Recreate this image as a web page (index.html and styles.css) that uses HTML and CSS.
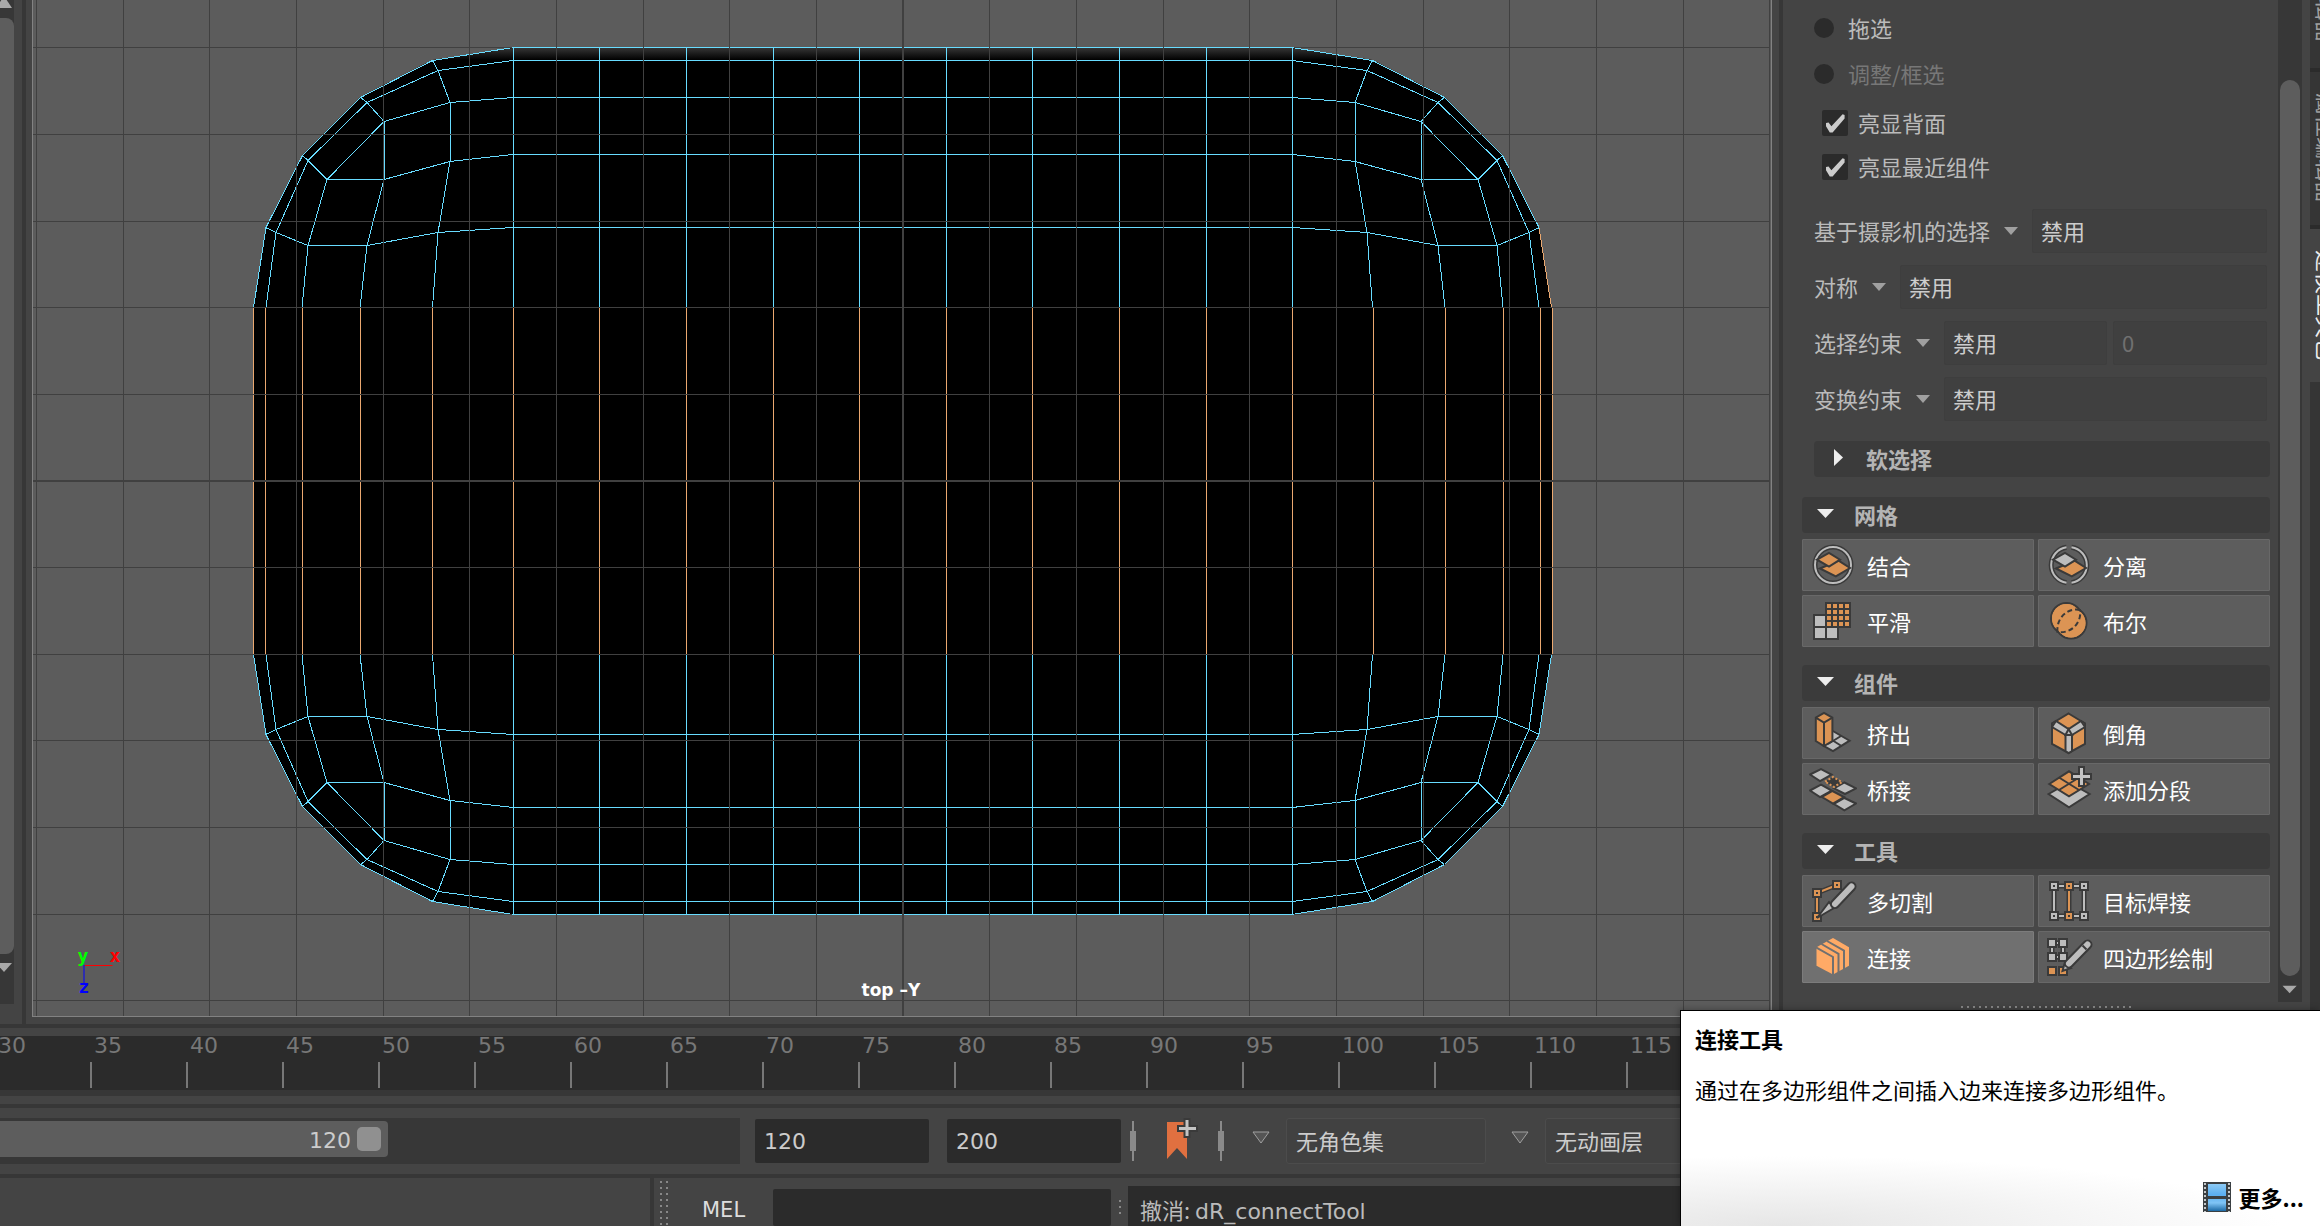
FILE: index.html
```html
<!DOCTYPE html>
<html lang="zh-CN">
<head>
<meta charset="utf-8">
<title>top -Y</title>
<link rel="stylesheet" href="styles.css">
</head>
<body>
<main class="workspace">
  <div class="side-scroll">
    <svg class="arrow" viewBox="0 0 14 18"><path d="M-4 8 4 -4 12 8z"/></svg>
    <div class="side-thumb"></div>
    <svg class="arrow arrow-end" viewBox="0 0 14 50"><path d="M-4 9H12L4 18z"/></svg>
  </div>
  <div class="splitter"></div>
  <section class="viewport" aria-label="top -Y">
    <svg viewBox="33 0 1739 1016" preserveAspectRatio="xMidYMid slice">
      <defs>
        <linearGradient id="rim" gradientUnits="userSpaceOnUse" x1="0" y1="48" x2="0" y2="60">
          <stop offset="0" stop-color="#343434"/><stop offset="1" stop-color="#000"/>
        </linearGradient>
        <linearGradient id="rim-side" gradientUnits="userSpaceOnUse" x1="350" y1="90" x2="357" y2="98">
          <stop offset="0" stop-color="#2c2c2c"/><stop offset="1" stop-color="#000"/>
        </linearGradient>
        <path id="corner-fill" d="M254 481V307.5L266 227.5 303 155.5 361 97.5 433 60.5 513.5 47.5H904V481z"/>
        <g id="corner-edge">
          <path d="M266.5 227.5 303 155.5 361 97.5 433 60.5 513.5 47.5"/>
          <path d="M266.5 307.5 276.5 232.5 308.5 160.5 367.5 102.5 438.5 70.5 513.5 60.5H904"/>
          <path d="M302.5 307.5 308.5 245.5 327.5 179.5 384.5 121.5 450.5 102.5 513.5 97.5H904"/>
          <path d="M360.5 307.5 367.5 245.5 384.5 179.5 450.5 161.5 513.5 154.5H904"/>
          <path d="M433 307.5 438.5 232.5 450.5 161.5V102.5L438.5 70.5 433 60.5"/>
          <path d="M361 97.5 367.5 102.5 384.5 121.5V179.5H327.5L308.5 160.5 303 155.5"/>
          <path d="M266 227.5 276.5 232.5 308.5 245.5H367.5L438.5 232.5 513.5 227.5H904"/>
          <path d="M513.5 47.5H904M513.5 47.5V307.5M599.5 47.5V307.5M686.5 47.5V307.5M773.5 47.5V307.5M859.5 47.5V307.5"/>
        </g>
        <path id="corner-outer" d="M254 307.5 266.5 227.5"/>
        <path id="picked" d="M253.5 307V655M265.5 307V655M302.5 307V655M360.5 307V655M432.5 307V655M513.5 307V655M599.5 307V655M686.5 307V655M773.5 307V655M859.5 307V655"/>
      </defs>
      <g class="mesh-fill">
        <use href="#corner-fill"/>
        <use href="#corner-fill" transform="translate(1806 0) scale(-1 1)"/>
        <use href="#corner-fill" transform="translate(0 962) scale(1 -1)"/>
        <use href="#corner-fill" transform="translate(1806 962) scale(-1 -1)"/>
      </g>
      <path fill="url(#rim)" d="M433 60 513 48H1293L1373 60 1368 70 1293 60H513L438 70z"/>
      <path id="rim-left" fill="url(#rim-side)" d="M303 155 361 97 433 60 438 70 367 102 308 160z"/>
      <use href="#rim-left" transform="translate(1806 0) scale(-1 1)"/>
      <g class="edge">
        <use href="#corner-edge"/><use href="#corner-outer"/>
        <use href="#corner-edge" transform="translate(1806 0) scale(-1 1)"/>
        <use href="#corner-edge" transform="translate(0 962) scale(1 -1)"/><use href="#corner-outer" transform="translate(0 962) scale(1 -1)"/>
        <use href="#corner-edge" transform="translate(1806 962) scale(-1 -1)"/><use href="#corner-outer" transform="translate(1806 962) scale(-1 -1)"/>
      </g>
      <g class="edge picked">
        <use href="#picked"/>
        <use href="#picked" transform="translate(1806 0) scale(-1 1)"/>
        <use href="#corner-outer" transform="translate(1806 0) scale(-1 1)"/>
      </g>
      <path class="grid" d="M36.500 0V1016M123.500 0V1016M209.500 0V1016M296.500 0V1016M383.500 0V1016M469.500 0V1016M556.500 0V1016M643.500 0V1016M729.500 0V1016M816.500 0V1016M902.500 0V1016M989.500 0V1016M1076.500 0V1016M1163.500 0V1016M1249.500 0V1016M1336.500 0V1016M1423.500 0V1016M1509.500 0V1016M1596.500 0V1016M1683.500 0V1016M1769.500 0V1016M33 47.500H254M33 134.500H1770M33 221.500H1770M33 307.500H1770M33 394.500H1770M33 480.500H1770M33 481.500H1770M33 567.500H1770M33 654.500H1770M33 740.500H1770M33 827.500H1770M33 914.500H512M1294 914.500H1770M33 1000.500H1770M254 47.500H512M1294 47.500H1770"/>
      <path class="grid" d="M903.500 0V1016"/>
      <path class="axis-x" d="M85 965.500H113"/>
      <path class="axis-z" d="M84.500 965V984"/>
      <g class="gizmo">
        <text class="gizmo-y" x="78" y="962">y</text>
        <text class="gizmo-x" x="110" y="962">x</text>
        <text class="gizmo-z" x="79" y="993">z</text>
      </g>
      <text class="camera" x="862" y="996">top –Y</text>
    </svg>
  </section>
  <div class="splitter splitter-right"></div>
  <aside class="toolkit">
    <div class="options">
      <label class="radio-row"><input type="radio" name="pick"><span>拖选</span></label>
      <label class="radio-row off"><input type="radio" name="pick" disabled><span>调整/框选</span></label>
      <div class="checks">
        <label class="check-row"><input type="checkbox" checked><span>亮显背面</span></label>
        <label class="check-row"><input type="checkbox" checked><span>亮显最近组件</span></label>
      </div>
      <div class="menu-row"><label for="camera">基于摄影机的选择</label><i class="caret"></i><select id="camera"><option>禁用</option></select></div>
      <div class="menu-row"><label for="symmetry">对称</label><i class="caret"></i><select id="symmetry"><option>禁用</option></select></div>
      <div class="menu-row"><label for="constraint">选择约束</label><i class="caret"></i><select id="constraint"><option>禁用</option></select><input class="amount" type="text" value="0" disabled aria-label="选择约束"></div>
      <div class="menu-row"><label for="transform">变换约束</label><i class="caret"></i><select id="transform"><option>禁用</option></select></div>
      <button class="fold fold-closed"><svg viewBox="0 0 18 18"><path d="M5 0V17L14 8.500z"/></svg>软选择</button>
    </div>
    <button class="fold"><svg viewBox="0 0 18 18"><path d="M0 4H17L8.500 13z"/></svg>网格</button>
    <div class="tools">
      <button class="tool"><svg viewBox="0 0 48 48"><circle class="halo" cx="24" cy="24" r="18"/><circle class="ring" cx="24" cy="24" r="18"/><path class="o" d="M11 27.500 29.600 19.700 41 27 26.800 35.300z"/><path class="o" d="M8 18.700 20 12 31 18.700 20 25.500z"/></svg>结合</button>
      <button class="tool"><svg viewBox="0 0 48 48"><path class="halo" d="M21.500 6.200A18 18 0 0 0 21.500 41.800M26.500 6.200A18 18 0 0 1 26.500 41.800"/><path class="ring" d="M21.500 6.200A18 18 0 0 0 21.500 41.800M26.500 6.200A18 18 0 0 1 26.500 41.800"/><path class="o" d="M11 27.500 29.600 19.700 41 27 26.800 35.300z"/><path class="g" d="M8 18.700 20 12 31 18.700 20 25.500z"/></svg>分离</button>
      <button class="tool"><svg viewBox="0 0 48 48"><path class="d" d="M4 17H16V5H42V31H30V43H4z"/><path class="gf" d="M6 19H16V29H6zM6 31H16V41H6zM18 31H28V41H18z"/><path class="of" d="M18 7h4v4h-4zM24 7h4v4h-4zM30 7h4v4h-4zM36 7h4v4h-4zM18 13h4v4h-4zM24 13h4v4h-4zM30 13h4v4h-4zM36 13h4v4h-4zM18 19h4v4h-4zM24 19h4v4h-4zM30 19h4v4h-4zM36 19h4v4h-4zM18 25h4v4h-4zM24 25h4v4h-4zM30 25h4v4h-4zM36 25h4v4h-4z"/></svg>平滑</button>
      <button class="tool"><svg viewBox="0 0 48 48"><g class="o"><circle cx="21.500" cy="21.500" r="15.500"/><circle cx="26" cy="26" r="15.500"/></g><g class="of"><circle cx="21.500" cy="21.500" r="14.500"/><circle cx="26" cy="26" r="14.500"/></g><path class="dash" d="M35 13C24 10 11 20 12.500 35C26 37 37 26 35 13z"/></svg>布尔</button>
    </div>
    <button class="fold"><svg viewBox="0 0 18 18"><path d="M0 4H17L8.500 13z"/></svg>组件</button>
    <div class="tools">
      <button class="tool"><svg viewBox="0 0 48 48"><path class="g" d="M23 21.500 40.600 31.700 24 42 15 37z"/><path class="l" d="M23 31 32.500 37M32 27 19 35"/><path class="o" d="M6.800 8.700 15 4 23.400 8.700V32L15 37 6.800 32z"/><path class="l" d="M6.800 8.700 15 13.500 23.400 8.700M15 13.500V37"/></svg>挤出</button>
      <button class="tool"><svg viewBox="0 0 48 48"><path class="o" d="M23.600 4.500 40 14.500V35L23.600 44 7 35V14.500z"/><path class="g" d="M7 14.500 11 12 23.600 20 36 12 40 14.500V18L27 26V42L23.600 44 20.500 42V26L7 18z"/><path class="l" d="M20.500 26 23.600 20 27 26zM11 12 7 18M36 12 40 18"/></svg>倒角</button>
      <button class="tool"><svg viewBox="0 0 48 48"><path class="g" d="M1 9.500 12 4 22.500 9.500 11 16zM25 23.300 35.400 17.500 47 23.300 36 29zM1 25.500 12 19.700 22.700 25.500 11 32zM25 39 35.400 33 47 38.500 35.400 45.300z"/><path class="o" d="M13 32 23.500 26 35 32 24 38.500z"/><path class="od" d="M16 16.500 24 12 33 17 25 22z"/></svg>桥接</button>
      <button class="tool"><svg viewBox="0 0 48 48"><path class="g" d="M3.600 29 24 17.300 44.600 29 24 42.300z"/><path class="o" d="M4.300 19 24 6.300 44 19 24 31.300z"/><path class="l" d="M14 12.500 34 25M34 12.500 14 25"/><path class="plus-back" d="M36.500 1V22M26 11.500H47"/><path class="plus" d="M36.500 3V20M28 11.500H45"/></svg>添加分段</button>
    </div>
    <button class="fold"><svg viewBox="0 0 18 18"><path d="M0 4H17L8.500 13z"/></svg>工具</button>
    <div class="tools">
      <button class="tool"><svg viewBox="0 0 48 48"><path class="halo" d="M8 40V16L28 8"/><path class="ol" d="M8 40V16L28 8"/><path class="pt-back" d="M3 11h10v10h-10zM23 3h10v10h-10zM3 35h10v10h-10z"/><path class="pt" d="M6 14h4v4h-4zM26 6h4v4h-4zM6 38h4v4h-4z"/><path class="g" d="M8 41 20 25 25 31z"/><path class="halo-w" d="M42.500 9.500 26 27"/><path class="handle" d="M42.500 9.500 26 27"/></svg>多切割</button>
      <button class="tool"><svg viewBox="0 0 48 48"><path class="halo" d="M9 9V39M24 9V39M39 9V39M9 9H39M9 39H39"/><path class="gl" d="M9 14V34M39 14V34M13 9H19M29 9H35M13 39H19M29 39H35"/><path class="ol" d="M24 14V34"/><path class="pt-back" d="M4 4h10v10h-10zM34 4h10v10h-10zM4 34h10v10h-10zM34 34h10v10h-10zM19 4h10v10h-10zM19 34h10v10h-10z"/><path class="pt pg" d="M7 7h4v4h-4zM37 7h4v4h-4zM7 37h4v4h-4zM37 37h4v4h-4z"/><path class="pt" d="M22 7h4v4h-4zM22 37h4v4h-4z"/></svg>目标焊接</button>
      <button class="tool active"><svg viewBox="0 0 48 48"><path class="cube" d="M24 5 40 14.300V32.700L24 41.500 7.500 32.700V14.300z"/><path class="cuts" d="M7 14.300 24 24V42M12.500 11 29.500 20.800V39M18 8 35 17.600V36"/></svg>连接</button>
      <button class="tool"><svg viewBox="0 0 48 48"><path class="halo" d="M7 10H18V24H7z"/><path class="gl" d="M7 10H18V24H7z"/><path class="sq" d="M3 6h8v8h-8zM14 6h8v8h-8zM3 20h8v8h-8zM14 20h8v8h-8z"/><path class="sq sqo" d="M3 34h8v8h-8zM14 34h8v8h-8z"/><path class="g" d="M17.500 38 20 29 26 35z"/><path class="halo-w" d="M42.500 11.500 24 30.500"/><path class="handle" d="M42.500 11.500 24 30.500"/><path class="l" d="M37.500 12.500 41.500 16.500"/></svg>四边形绘制</button>
    </div>
    <div class="grip-h"></div>
  </aside>
  <div class="panel-scroll">
    <div class="panel-thumb"></div>
    <svg viewBox="0 0 24 26"><path d="M3 9H20L11.500 18z"/></svg>
  </div>
  <nav class="tabs">
    <a class="tab tab-first" href="#channels">通道盒/层编辑器</a>
    <a class="tab" href="#attributes">属性编辑器</a>
    <a class="tab current" href="#modeling">建模工具包</a>
  </nav>
</main>
<section class="timeline" aria-label="时间滑块">
  <span>30</span><span>35</span><span>40</span><span>45</span><span>50</span><span>55</span><span>60</span><span>65</span><span>70</span><span>75</span><span>80</span><span>85</span><span>90</span><span>95</span><span>100</span><span>105</span><span>110</span><span>115</span>
</section>
<section class="range-bar">
  <div class="range"><div class="range-thumb"><span>120</span><i></i></div></div>
  <input class="frame" type="text" value="120" aria-label="播放结束时间">
  <input class="frame" type="text" value="200" aria-label="动画结束时间">
  <svg class="marks" viewBox="0 0 100 46">
    <path class="mark" d="M6 3V43M94 3V43"/><path class="mark thick" d="M6 13V33M94 13V33"/>
    <path class="bookmark" d="M40 4H60V41L50 30 40 41z"/><path class="mark-halo" d="M60 0V20M50 10.500H71"/><path class="mark-plus" d="M60 2V18M52 10.500H69"/>
  </svg>
  <label class="layer-menu" for="charset" aria-label="角色集"><svg viewBox="0 0 20 14"><path d="M2 1H18L10 12z"/></svg></label>
  <select class="layer" id="charset"><option>无角色集</option></select>
  <label class="layer-menu" for="layer" aria-label="动画层"><svg viewBox="0 0 20 14"><path d="M2 1H18L10 12z"/></svg></label>
  <select class="layer" id="layer"><option>无动画层</option></select>
</section>
<section class="command-bar">
  <div class="help-line"></div>
  <div class="grip-v"></div>
  <label class="mel" for="mel">MEL</label>
  <input class="command" id="mel" type="text">
  <div class="grip-dots"></div>
  <output class="result">撤消: <span>dR_connectTool</span></output>
</section>
<div class="tooltip" role="tooltip">
  <strong>连接工具</strong>
  <p>通过在多边形组件之间插入边来连接多边形组件。</p>
  <a class="more" href="#more"><svg viewBox="0 0 28 30">
    <defs><linearGradient id="film" x1="0" y1="0" x2="0" y2="1"><stop offset="0" stop-color="#8ccaf5"/><stop offset=".4" stop-color="#5aaef0"/><stop offset=".7" stop-color="#7fc4f5"/><stop offset="1" stop-color="#1d6aa5"/></linearGradient></defs>
    <path fill="#3a3f42" d="M0 0H28V30H0z"/><path fill="url(#film)" d="M5 2H23V14H5zM5 17H23V29H5z"/><path stroke="#c4c8ca" stroke-width="2" stroke-dasharray="2 2" d="M2 1V30M26 1V30"/></svg>更多...</a>
</div>
</body>
</html>
```
FILE: styles.css
```css
* { box-sizing: border-box; }

body {
  margin: 0;
  height: 100vh;
  display: flex;
  flex-direction: column;
  overflow: hidden;
  background: #444;
  color: #bbb;
  font: 22px/32px "Noto Sans CJK SC", sans-serif;
}

button, input, select { font: inherit; color: inherit; border: 0; margin: 0; border-radius: 0; }
select { appearance: none; }
svg { display: block; flex: none; }

/* main area */
.workspace { flex: 1; min-height: 0; display: flex; border-bottom: 4px solid #373737; }

.side-scroll { width: 14px; height: calc(100% - 20px); background: #373737; display: flex; flex-direction: column; }
.side-scroll svg, .panel-scroll svg { fill: #a8a8a8; width: 100%; }
.side-scroll .arrow { height: 18px; }
.side-scroll .arrow-end { height: 50px; }
.side-thumb { flex: 1; background: #5d5d5d; border-radius: 0 8px 8px 0; }

.splitter { width: 18px; border-left: 8px solid #444; background: linear-gradient(to right, #373737 4px, #444 4px); }
.splitter-right { width: 12px; border-left-width: 7px; }

.viewport { flex: 1; min-width: 0; margin-bottom: 7px; background: #5c5c5c; border: solid #828282; border-width: 0 1px 1px; overflow: hidden; }
.viewport svg { width: 100%; height: 100%; }
.mesh-fill { fill: #000; shape-rendering: crispEdges; }
.edge { fill: none; stroke: #68dcff; shape-rendering: crispEdges; }
.picked { stroke: #eaa870; }
.grid { fill: none; stroke: #404040; shape-rendering: crispEdges; }
.axis-x { stroke: #f00; }
.axis-z { stroke: #00f; }
.gizmo { font: bold 18px "DejaVu Sans Mono", monospace; }
.gizmo-x { fill: #f00; }
.gizmo-y { fill: #0f0; }
.gizmo-z { fill: #00f; }
.camera { fill: #fff; font: bold 17px "DejaVu Sans", sans-serif; }

/* modeling toolkit */
.toolkit { width: 494px; flex: none; padding: 5px 8px 0 18px; }
.options { padding-left: 12px; }
.radio-row { display: flex; align-items: center; gap: 14px; height: 46px; }
.radio-row input { appearance: none; width: 20px; height: 20px; border-radius: 50%; background: #2b2b2b; }
.radio-row span, .check-row span { padding-bottom: 2px; }
.off { color: #777; }
.checks { padding: 4px 0 14px 8px; }
.check-row { display: flex; align-items: center; gap: 10px; height: 44px; }
.check-row input { appearance: none; width: 26px; height: 26px; border-radius: 2px; background: #2b2b2b; display: grid; place-items: center; }
.check-row input::before { content: ""; width: 20px; height: 20px; background: #ccc; clip-path: polygon(5% 50%, 18% 48%, 32% 66%, 88% 6%, 98% 10%, 98% 28%, 38% 98%, 24% 98%, 5% 66%); }
.menu-row { display: flex; align-items: center; height: 56px; padding-right: 3px; }
.menu-row label { padding-bottom: 3px; }
.caret { flex: none; width: 14px; height: 8px; margin: 0 14px; background: #a0a0a0; clip-path: polygon(0 0, 100% 0, 50% 100%); }
.menu-row select, .amount { flex: 1; min-width: 0; height: 44px; padding: 0 8px 3px; background: #404040; border: 1px solid #3e3e3e; border-radius: 2px; color: #ccc; }
.menu-row .amount { margin-left: 6px; color: #707070; flex: 0 0 154px; }

.fold { display: flex; align-items: center; gap: 19px; width: 100%; height: 36px; margin-top: 18px; padding: 0 15px 2px; background: #3b3b3b; border-radius: 4px; color: #b4b4b4; font-weight: bold; }
.fold svg { width: 18px; height: 18px; fill: #eee; }
.fold-closed { margin: 14px 0 20px; }

.tools { display: grid; grid-template-columns: 1fr 1fr; gap: 4px; margin-top: 6px; background: #484848; }
.tool { display: flex; align-items: center; gap: 10px; height: 52px; padding: 0 6px; background: #5d5d5d; border: 1px solid #686868; border-radius: 1px; color: #fff; }
.tool svg { width: 48px; height: 48px; }
.tool.active { background: #707070; border-color: #7c7c7c; }
.o { fill: #dc9454; stroke: #3a3a3a; stroke-width: 2; }
.g { fill: #bdbdbd; stroke: #3a3a3a; stroke-width: 2; }
.of { fill: #dc9454; }
.gf { fill: #bdbdbd; }
.d { fill: #3a3a3a; }
.l { fill: none; stroke: #3a3a3a; stroke-width: 2; }
.halo { fill: none; stroke: #3a3a3a; stroke-width: 5; }
.ring, .gl { fill: none; stroke: #bdbdbd; stroke-width: 2; }
.ol { fill: none; stroke: #dc9454; stroke-width: 2; }
.od { fill: #3a3a3a; stroke: #dc9454; stroke-width: 2; stroke-dasharray: 2 2; }
.dash { fill: none; stroke: #3a3a3a; stroke-width: 2; stroke-dasharray: 5 3; }
.pt-back { fill: #3a3a3a; }
.pt { fill: #3a3a3a; stroke: #dc9454; stroke-width: 2; }
.pg { stroke: #bdbdbd; }
.sq { fill: #bdbdbd; stroke: #3a3a3a; stroke-width: 2; }
.sqo { fill: #dc9454; }
.halo-w { stroke: #3a3a3a; stroke-width: 10; stroke-linecap: round; }
.handle { stroke: #bdbdbd; stroke-width: 6; stroke-linecap: round; }
.plus-back { stroke: #3a3a3a; stroke-width: 7; }
.plus { stroke: #c4c4c4; stroke-width: 3; }
.cube { fill: #ffaa66; }
.cuts { fill: none; stroke: #707070; stroke-width: 2; }

.grip-h { width: 170px; height: 2px; margin: 23px 139px 0 auto; background: repeating-linear-gradient(to right, #888 0 2px, transparent 2px 6px); }

.panel-scroll { width: 24px; flex: none; height: calc(100% - 22px); padding: 80px 2px 0; background: #373737; display: flex; flex-direction: column; }
.panel-thumb { flex: 1; background: #5d5d5d; border-radius: 10px; }
.panel-scroll svg { height: 26px; }

.tabs { width: 18px; flex: none; border-left: 8px solid #444; background: #353535; overflow: hidden; }
.tab { display: flex; justify-content: center; width: 32px; height: 157px; padding-left: 3px; border-bottom: 4px solid #2b2b2b; color: #a0a0a0; line-height: 28px; text-decoration: none; white-space: nowrap; writing-mode: vertical-rl; text-orientation: sideways; }
.tab-first { height: 72px; justify-content: flex-end; padding-bottom: 25px; }
.tab.current { background: #444; color: #eee; border: 0; height: 153px; }

/* time slider */
.timeline { display: flex; height: 68px; background: #2b2b2b; border-top: 8px solid #444; border-bottom: 6px solid #373737; overflow: hidden; font: 22px/20px "DejaVu Sans", sans-serif; color: #777; }
.timeline span { flex: 0 0 96px; padding-left: 4px; }
.timeline span:first-child { margin-left: -6px; }
.timeline span::after { content: ""; display: block; width: 2px; height: 26px; margin: 6px 0 0 -4px; background: #777; }

/* range slider */
.range-bar { display: flex; align-items: center; height: 82px; padding-top: 12px; border-bottom: 4px solid #373737; background: linear-gradient(#444 8px, #373737 8px 12px, #444 12px); }
.range { flex: 0 0 740px; height: 46px; background: #373737; padding: 3px 0; margin-right: 15px; }
.range-thumb { display: flex; justify-content: flex-end; align-items: center; gap: 6px; width: 388px; height: 36px; padding-right: 7px; background: #5d5d5d; border-radius: 0 4px 4px 0; color: #ccc; font-family: "DejaVu Sans", sans-serif; }
.range-thumb span { padding-top: 4px; }
.range-thumb i { width: 24px; height: 24px; border-radius: 5px; background: #909090; }
.frame { width: 174px; height: 44px; margin-right: 18px; padding: 0 9px; background: #2b2b2b; border-radius: 2px; color: #ccc; font-family: "DejaVu Sans", sans-serif; }
.frame + .frame { margin-right: 6px; }
.marks { width: 100px; height: 46px; }
.mark { stroke: #8a8a8a; stroke-width: 2; }
.thick { stroke-width: 6; }
.bookmark { fill: #e07040; }
.mark-halo { stroke: #3a3a3a; stroke-width: 7; }
.mark-plus { stroke: #c4c4c4; stroke-width: 3; }
.layer-menu svg { width: 20px; height: 14px; margin: 0 15px 6px 24px; fill: #555; stroke: #a0a0a0; stroke-width: 1; }
.layer { width: 200px; height: 46px; padding: 0 9px 3px; background: #414141; border: 1px solid #4c4c4c; border-radius: 3px; color: #ccc; }

/* command line */
.command-bar { display: flex; height: 48px; overflow: hidden; }
.help-line { flex: 0 0 654px; border-right: 4px solid #373737; }
.grip-v { width: 8px; margin: 3px 34px 0 6px; background: linear-gradient(to right, #0000 2px, #444 2px 6px, #0000 6px), repeating-linear-gradient(#888 0 2px, #444 2px 6px); }
.mel { padding-top: 16px; width: 71px; color: #ddd; font-family: "DejaVu Sans", sans-serif; font-size: 21px; }
.command { width: 338px; margin-top: 11px; background: #2b2b2b; border-radius: 2px; }
.grip-dots { width: 2px; height: 15px; margin: 22px 7px 0 8px; background: repeating-linear-gradient(#888 0 2px, transparent 2px 6px); }
.result { flex: 1; margin-top: 8px; padding: 7px 12px; background: #2b2b2b; color: #bbb; white-space: nowrap; }
.result span { font-family: "DejaVu Sans", sans-serif; }

/* tool help */
.tooltip { position: absolute; right: 0; bottom: 0; width: 640px; height: 216px; padding: 11px 14px; border: solid #000; border-width: 1px 0 0 1px; background: radial-gradient(ellipse 500px 70px at 100px 100%, #e6e6e6, #fff0), #fff; color: #000; display: flex; flex-direction: column; box-shadow: -1px -1px 6px #0004; }
.tooltip p { margin: 19px 0 0; }
.more { display: flex; align-items: center; gap: 8px; margin: auto 2px 2px auto; color: #000; font-weight: bold; text-decoration: none; }
.more svg { width: 28px; height: 30px; }
```
